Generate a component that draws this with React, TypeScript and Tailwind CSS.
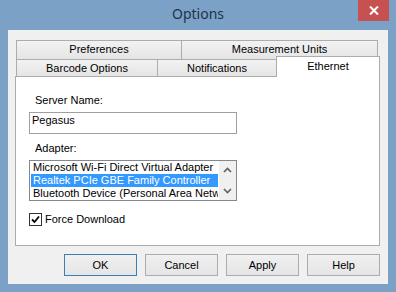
import { useState } from "react";

const adapters = [
  "Microsoft Wi-Fi Direct Virtual Adapter",
  "Realtek PCIe GBE Family Controller",
  "Bluetooth Device (Personal Area Network)",
];

const tabBase =
  "flex items-start justify-center border-t border-l border-[#acacac] bg-gradient-to-b from-[#f2f2f2] to-[#e5e5e5] pt-[2px] leading-[13px]";

const DialogButton = ({ label, primary }: { label: string; primary?: boolean }) => (
  <button
    className={`w-[73px] h-[22px] border leading-[13px] text-black bg-gradient-to-b from-[#f0f0f0] to-[#e5e5e5] ${
      primary ? "border-[#3c7fb1]" : "border-[#acacac]"
    }`}
  >
    {label}
  </button>
);

const App = () => {
  const [server, setServer] = useState("Pegasus");
  const [selected, setSelected] = useState(1);
  const [force, setForce] = useState(true);

  return (
    <div className="w-[396px] h-[292px] bg-[#7ba2c6] flex flex-col font-['Liberation_Sans',Arial,sans-serif] text-[11px] text-black">
      {/* title bar */}
      <div className="h-[30px] grid grid-cols-[1fr_auto_1fr]">
        <div />
        <div className="pt-[4px] text-[14px] leading-[20px] text-[#1f3247] font-['Noto_Sans',sans-serif]">Options</div>
        <div className="flex justify-end pr-[7px]">
          <div className="w-[31px] h-[21px] bg-[#c75050] flex items-center justify-center">
            <svg width="10" height="9" viewBox="0 0 10 9">
              <path d="M1 0.5 L9 8.5 M9 0.5 L1 8.5" stroke="#fff" strokeWidth="2" />
            </svg>
          </div>
        </div>
      </div>

      {/* client area */}
      <div className="mx-[8px] h-[254px] bg-[#f0f0f0] flex flex-col pl-[7px] pr-[8px] pt-[10px]">
        {/* tab row 1 */}
        <div className="flex h-[19px] ml-[1px]">
          <div className={`${tabBase} w-[165px]`}>Preferences</div>
          <div className={`${tabBase} w-[197px] border-r`}>Measurement Units</div>
        </div>
        {/* tab row 2 */}
        <div className="flex h-[17px] ml-[1px]">
          <div className={`${tabBase} w-[141px]`}>Barcode Options</div>
          <div className={`${tabBase} w-[119px]`}>Notifications</div>
          <div className="relative z-10 -mt-[3px] h-[21px] w-[104px] bg-white border-t border-l border-r border-[#acacac] flex justify-center pt-[3px] leading-[13px]">
            Ethernet
          </div>
        </div>

        {/* panel */}
        <div className="h-[170px] w-[365px] bg-white border border-[#acacac] pl-[13px] pt-[17px] flex flex-col">
          <div className="ml-[6px] leading-[13px]">Server Name:</div>
          <input
            value={server}
            onChange={(e) => setServer(e.target.value)}
            className="mt-[5px] w-[208px] h-[22px] border border-[#a0a0a0] bg-white px-[2px] pb-[6px] leading-[13px] outline-none"
          />
          <div className="mt-[8px] ml-[6px] leading-[13px]">Adapter:</div>
          <div className="mt-[5px] w-[208px] h-[41px] border border-[#828790] bg-white flex">
            <div className="flex-1 flex flex-col pl-[1px] pr-[1px] overflow-hidden">
              {adapters.map((a, i) => (
                <div
                  key={a}
                  onClick={() => setSelected(i)}
                  className={`h-[13px] leading-[13px] pl-[2px] whitespace-nowrap overflow-hidden ${
                    selected === i ? "bg-[#3399ff] text-white" : ""
                  }`}
                >
                  {a}
                </div>
              ))}
            </div>
            <div className="w-[17px] bg-[#f0f0f0] flex flex-col items-center justify-between py-[6px]">
              <svg width="9" height="6" viewBox="0 0 9 6">
                <path d="M1 5 L4.5 1.5 L8 5" stroke="#606060" strokeWidth="1.6" fill="none" />
              </svg>
              <svg width="9" height="6" viewBox="0 0 9 6">
                <path d="M1 1 L4.5 4.5 L8 1" stroke="#606060" strokeWidth="1.6" fill="none" />
              </svg>
            </div>
          </div>
          <label className="mt-[12px] flex items-center gap-[3px] leading-[13px]">
            <span
              onClick={() => setForce(!force)}
              className="w-[13px] h-[13px] border border-[#333] bg-white flex items-center justify-center"
            >
              {force && (
                <svg width="9" height="9" viewBox="0 0 9 9">
                  <path d="M1 4.5 L3.5 7 L8 1.5" stroke="#000" strokeWidth="1.8" fill="none" />
                </svg>
              )}
            </span>
            Force Download
          </label>
        </div>

        {/* buttons */}
        <div className="mt-[8px] flex justify-end gap-[8px]">
          <DialogButton label="OK" primary />
          <DialogButton label="Cancel" />
          <DialogButton label="Apply" />
          <DialogButton label="Help" />
        </div>
      </div>
    </div>
  );
};

export default App;
